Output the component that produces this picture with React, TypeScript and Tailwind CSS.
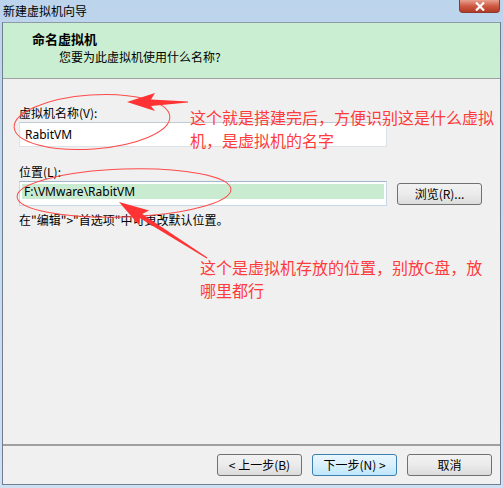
import React from "react";

const ui = { fontFamily: '"Noto Sans", "Noto Sans CJK SC", sans-serif' };
const cjk = { fontFamily: '"Noto Sans CJK SC", "Noto Sans", sans-serif' };

function WinButton({ label, active = false }: { label: string; active?: boolean }) {
  return (
    <button
      type="button"
      className={`flex h-[22px] w-[85px] items-center justify-center rounded-[3px] border text-[12px] text-black ${
        active
          ? "border-[#3c7fb1] bg-gradient-to-b from-[#eaf6fd] via-[#d9f0fc] to-[#bee6fd]"
          : "border-[#707070] bg-gradient-to-b from-[#f2f2f2] via-[#ebebeb] to-[#dcdcdc]"
      }`}
      style={cjk}
    >
      {label}
    </button>
  );
}

function Annotations() {
  return (
    <svg className="pointer-events-none absolute left-0 top-0" width="503" height="488" viewBox="0 0 503 488">
      <ellipse cx="92" cy="122" rx="78" ry="27" transform="rotate(-4 92 122)" fill="none" stroke="#ff4a4a" strokeWidth="1" />
      <ellipse cx="124" cy="193" rx="107" ry="24" transform="rotate(-2 124 193)" fill="none" stroke="#ff4a4a" strokeWidth="1" />
      <polygon points="127,102 155,93 151,99.5 188,101.5 188,102.5 151,106 155,111" fill="#ff3333" />
      <polygon points="119,202 149.1,210.5 142.2,213.9 207.3,257.5 206.7,258.5 139.6,218.1 139.5,225.7" fill="#ff3333" />
    </svg>
  );
}

export default function App() {
  return (
    <div className="relative h-[488px] w-[503px] overflow-hidden bg-gradient-to-b from-[#bcd4ec] to-[#cfe0f3]" style={cjk}>
      {/* title bar */}
      <div className="relative flex h-[22px] items-center pl-[3px] text-[12px] text-black">
        新建虚拟机向导
        <div className="absolute right-[3px] top-0 flex h-[13px] w-[41px] items-center justify-center rounded-b-[4px] border border-t-0 border-[#8a3a30] bg-gradient-to-b from-[#e8a08f] via-[#cf5a44] to-[#b33a24]">
          <svg width="10" height="9" viewBox="0 0 10 9">
            <path d="M1 0.5 L9 8.5 M9 0.5 L1 8.5" stroke="#ffffff" strokeWidth="2.2" />
          </svg>
        </div>
      </div>

      {/* client area */}
      <div className="mx-[2px] flex h-[463px] flex-col border border-t-0 border-[#6f7f90] bg-[#f0f0f0]">
        <div className="h-[57px] border-y border-[#8e9aa6] border-b-[#a0a0a0] bg-[#c9eed1] pl-[29px] pt-[7px]">
          <div className="text-[13px] font-bold leading-[18px] text-black">命名虚拟机</div>
          <div className="pl-[27px] text-[12px] leading-[18px] text-black">您要为此虚拟机使用什么名称?</div>
        </div>

        <div className="flex flex-1 flex-col pl-[16px] text-[12px] text-black">
          <div className="pt-[26px] leading-[16px]">虚拟机名称(V):</div>
          <div className="mt-[1px] flex h-[25px] w-[368px] items-center border border-[#dde2e8] border-t-[#c4cad2] bg-white pl-[5px]" style={ui}>
            RabitVM
          </div>

          <div className="mt-[17px] leading-[16px]">位置(L):</div>
          <div className="mt-[1px] flex items-center gap-[10px]">
            <div className="flex h-[25px] w-[368px] items-start border border-[#c8d8e8] border-t-[#9fb6cc] bg-white p-[2px]">
              <div className="flex h-[15px] w-full items-center bg-[#c9ecd0] pl-[2px] text-[12px]" style={ui}>
                F:\VMware\RabitVM
              </div>
            </div>
            <WinButton label="浏览(R)..." />
          </div>

          <div className="mt-[6px] leading-[16px]">在"编辑"&gt;"首选项"中可更改默认位置。</div>
        </div>

        <div className="flex h-[40px] justify-end gap-[10px] border-t-2 border-[#a0a0a0] border-b-0 pr-[8px] pt-[8px]">
          <WinButton label="< 上一步(B)" />
          <WinButton label="下一步(N) >" active />
          <WinButton label="取消" />
        </div>
      </div>

      <Annotations />

      <div className="absolute left-[190px] top-[106px] text-[16px] leading-[23px] text-[#ff3b3b]" style={cjk}>
        <div>这个就是搭建完后，方便识别这是什么虚拟</div>
        <div>机，是虚拟机的名字</div>
      </div>
      <div className="absolute left-[200px] top-[256px] text-[16px] leading-[23px] text-[#ff3b3b]" style={cjk}>
        <div>这个是虚拟机存放的位置，别放C盘，放</div>
        <div>哪里都行</div>
      </div>
    </div>
  );
}
